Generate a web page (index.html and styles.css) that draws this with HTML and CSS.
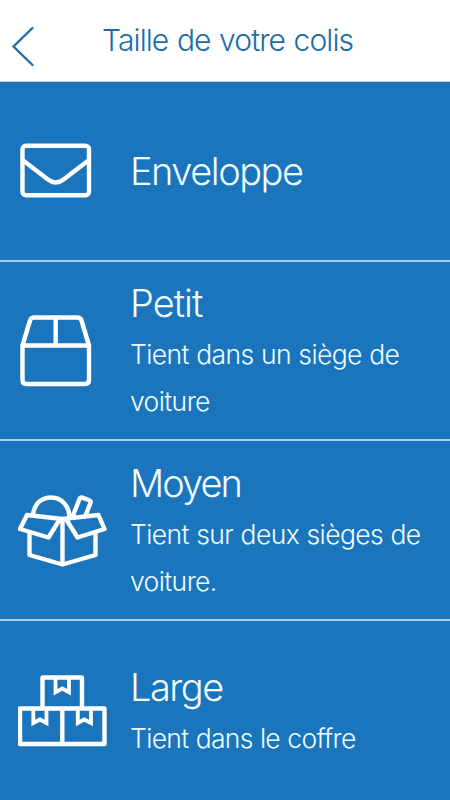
FILE: index.html
```html
<!DOCTYPE html>
<html lang="fr">
<head>
    <meta charset="UTF-8">
    <title>Taille de votre colis</title>
    <meta name="viewport" content="width=device-width, initial-scale=1.0">
    <link rel="stylesheet" href="styles.css">
</head>
<body>
    <header class="header">
        <a class="back" aria-label="Retour">
            <svg width="25" height="42" viewBox="0 0 25 42"><path d="M22.5 2 L3.5 20.5 L22.5 39"/></svg>
        </a>
        <h1 class="header-title">Taille de votre colis</h1>
    </header>

    <main class="sizes">
        <div class="size">
            <svg class="size-icon" width="90" height="80" viewBox="0 0 90 80">
                <rect x="4.5" y="14.8" width="66.5" height="49.5" rx="3.5"/>
                <path d="M4.5 29 L30 48.5 Q37.7 54.5 45.5 48.5 L71 29"/>
            </svg>
            <div class="size-text">
                <h2 class="size-name name-envelope">Enveloppe</h2>
            </div>
        </div>
        <div class="size">
            <svg class="size-icon" width="90" height="80" viewBox="0 0 90 80">
                <path d="M4.5 34.5 L12 9.5 Q13 6.5 16 6.5 H59.5 Q62.5 6.5 63.5 9.5 L71 34.5 V69 Q71 73 67 73 H8.5 Q4.5 73 4.5 69 Z M4.5 34.5 H71 M37.7 6.5 V34.5"/>
            </svg>
            <div class="size-text">
                <h2 class="size-name name-small">Petit</h2>
                <p class="size-desc">Tient dans un siège de voiture</p>
            </div>
        </div>
        <div class="size size-medium">
            <svg class="size-icon" width="90" height="80" viewBox="0 0 90 80">
                <path d="M15 23.5 C16.5 12 24 6.5 33 6.5 C43.5 6.5 51.5 15 51.5 26.5"/>
                <path d="M55 24.5 L61.5 8 Q62.3 6 64.3 6.7 L71.3 9.3 Q73.3 10 72.5 12 L67.5 24.5"/>
                <path d="M44.5 28 L9 24 L2 38 L30.5 46.5 L42 28 M44.5 28 L80.5 24 L86.5 38 L59.5 46.5 L48 28"/>
                <path d="M11.5 42 V64 L44.5 73.5 L77.5 64 V42 M44.5 28 V73.5"/>
            </svg>
            <div class="size-text">
                <h2 class="size-name name-medium">Moyen</h2>
                <p class="size-desc">Tient sur deux sièges de voiture.</p>
            </div>
        </div>
        <div class="size">
            <svg class="size-icon" width="90" height="80" viewBox="0 0 90 80">
                <path d="M24.5 37.5 V6.5 H64 V37.5 M2 37.5 H86.5 V73 H2 Z M44.3 37.5 V73"/>
                <path class="ribbon" d="M37.5 7 V21.3 L44.3 17.5 L51 21.3 V7 M15.3 38 V52 L22 48.5 L28.5 52 V38 M59.8 38 V52 L66.3 48.5 L73 52 V38"/>
            </svg>
            <div class="size-text">
                <h2 class="size-name name-large">Large</h2>
                <p class="size-desc desc-large">Tient dans le coffre</p>
            </div>
        </div>
    </main>
</body>
</html>
```
FILE: styles.css
```css
body {
    margin: 0;
    height: 800px;
    overflow: hidden;
    font-family: Inter, "Liberation Sans", sans-serif;
    font-weight: 300;
    background: #1b75bc;
}
h1, h2, p {
    margin: 0;
    font-weight: 300;
}
svg {
    display: block;
    fill: none;
    stroke-linecap: round;
    stroke-linejoin: round;
}
.header {
    display: flex;
    box-sizing: border-box;
    height: 82px;
    padding-left: 10px;
    background: #fff;
    border-bottom: 1px solid #b5d3e9;
}
.back {
    width: 92px;
    padding-top: 26px;
    box-sizing: border-box;
}
.back svg {
    stroke: #1c6ca8;
    stroke-width: 2.4;
}
.header-title {
    font-size: 30px;
    line-height: 80px;
    letter-spacing: -0.9px;
    word-spacing: 1px;
    color: #1c6ca8;
    white-space: nowrap;
}

/* Liste des tailles */
.size {
    display: flex;
    align-items: center;
    box-sizing: border-box;
    height: 179.6px;
    padding-left: 18px;
    border-bottom: 2px solid #a5cde8;
    color: #f0fcff;
}
.size:last-child {
    border-bottom: none;
}
.size-medium {
    padding-top: 2px;
}
.size-icon {
    flex: none;
    margin-top: 1px;
    margin-right: 22px;
    stroke: #fff;
    stroke-width: 4.4;
}
.size-icon .ribbon {
    stroke-width: 3.8;
    stroke-linejoin: miter;
}
.size-text {
    width: 310px;
}
.size-name {
    font-size: 38px;
    line-height: 54px;
    letter-spacing: -1px;
}
.name-envelope {
    letter-spacing: -1.5px;
}
.name-medium {
    letter-spacing: -2px;
}
.name-large {
    letter-spacing: -1.5px;
}
.size-desc {
    padding-top: 1px;
    font-size: 26.5px;
    line-height: 47px;
    letter-spacing: -0.6px;
    word-spacing: 0.5px;
}
.desc-large {
    letter-spacing: -0.7px;
}
```
